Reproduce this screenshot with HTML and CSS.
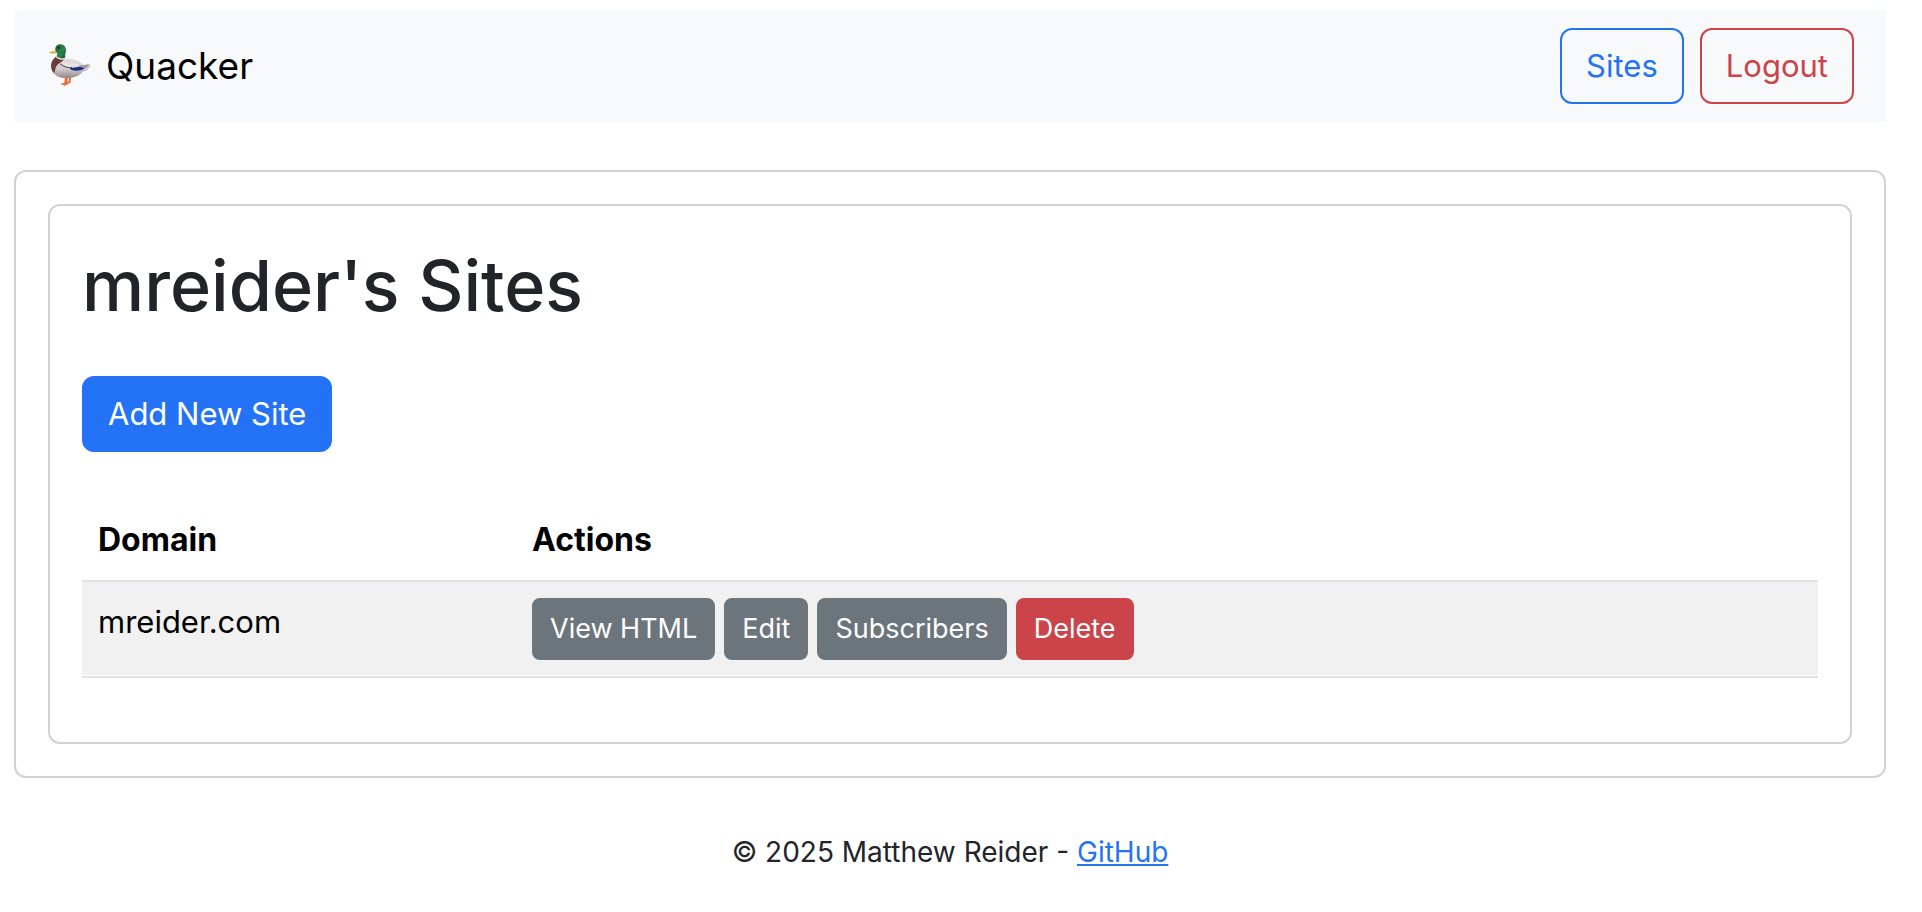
FILE: index.html
```html
<!DOCTYPE html>
<html lang="en">
<head>
<meta charset="utf-8">
<meta name="viewport" content="width=device-width, initial-scale=1">
<title>Quacker</title>
<link rel="stylesheet" href="styles.css">
</head>
<body>
<nav class="navbar">
  <a class="brand" href="#">
    <svg class="brand-duck" viewBox="0 0 44 44" aria-hidden="true">
      <defs>
        <linearGradient id="wing" x1="0" y1="0" x2="0" y2="1">
          <stop offset="0" stop-color="#e6dfe0"/>
          <stop offset=".55" stop-color="#d2cacc"/>
          <stop offset="1" stop-color="#8f8688"/>
        </linearGradient>
        <linearGradient id="head" x1="0" y1="0" x2="1" y2="1">
          <stop offset="0" stop-color="#1f5f35"/>
          <stop offset=".6" stop-color="#2a8547"/>
          <stop offset="1" stop-color="#14502c"/>
        </linearGradient>
      </defs>
      <path d="M17 33l-.6 5.500-4.400 1.600 3.200.6 1.600 1.400 2-1.600 1.200.3-.6-2 .6-5.800zM21 33l-.4 4.600-3 1.400 3.400.6 2-1.200-.5-1 .8-4.400z" fill="#ec6a35"/>
      <path d="M8 14C4 18 2.500 23 4.600 27.500c3 5.500 9.400 7 15.400 6.500 7-.5 12.500-3 15-6.500 4-.6 7.500-3.500 8-7-2.500.8-5 1-7.500.4C31 16.500 25 14.200 17 14.400z" fill="url(#wing)"/>
      <path d="M8.300 12.500C4.500 15 2.600 19 3.200 23.500c.3 2.300 1.300 4.300 3 5.800 1.300-3.500.8-5.300 2.800-8 1.800-2.500 5.500-3.500 7.700-6.900z" fill="#6b3c37"/>
      <path d="M8.500 11.700c2.400 2.300 5.400 3 8.600 2l-.5 1.500c-2.800 1-6.600.6-8.800-1.900z" fill="#e9e7e5"/>
      <path d="M12 20c5-2.300 15-1.500 22 1l-6 3.400c-5 .5-11-.8-16-4.400z" fill="#e9e2e3"/>
      <path d="M12 19.800c4 3.200 8.500 4.300 12 4" fill="none" stroke="#493d40" stroke-width="1"/>
      <path d="M22 23.500c4 .6 9-1 12.500-1.500l2 2.500c-4 2.500-9.500 3-14 1z" fill="#1b2f86"/>
      <path d="M30 21.800c3.500-.7 8-.7 11.500-2l-3.200 4.400c-2.800.2-5.300-.7-8.300-2.400z" fill="#a39a9c"/>
      <path d="M7.200 6.400C5 7 2.200 7.600.5 8.300c1.500 1.500 5.500 1.500 8.300 1z" fill="#e3b04a"/>
      <path d="M12 .2c4 0 6.200 2.800 6 6-.1 2.500-1.300 4.200-.7 7.200-2.600 1.500-6.400.9-8.800-1.400.8-1.200 1.200-2.200.2-3.600C5.500 4.500 8.300.2 12 .2z" fill="url(#head)"/>
      <circle cx="10.600" cy="3.800" r="1" fill="#0b130d"/>
    </svg>
    <span>Quacker</span>
  </a>
  <div class="nav-actions">
    <a class="btn btn-outline-primary" href="#">Sites</a>
    <button class="btn btn-outline-danger" type="button">Logout</button>
  </div>
</nav>

<main class="card">
  <section class="card card-inner">
    <h1 class="title">mreider's Sites</h1>
    <a class="btn btn-primary" href="#">Add New Site</a>
    <table class="sites">
      <thead>
        <tr><th class="col-domain" scope="col">Domain</th><th scope="col">Actions</th></tr>
      </thead>
      <tbody>
        <tr>
          <td>mreider.com</td>
          <td>
            <div class="row-actions">
              <a class="btn btn-sm btn-secondary" href="#">View HTML</a>
              <a class="btn btn-sm btn-secondary" href="#">Edit</a>
              <a class="btn btn-sm btn-secondary" href="#">Subscribers</a>
              <button class="btn btn-sm btn-danger" type="button">Delete</button>
            </div>
          </td>
        </tr>
      </tbody>
    </table>
  </section>
</main>

<footer class="footer">© 2025 Matthew Reider - <a class="footer-link" href="#">GitHub</a></footer>
</body>
</html>
```
FILE: styles.css
```css
* {
  box-sizing: border-box;
}

body {
  margin: 0;
  padding: 10px 36px 0 14px;
  background: #fff;
  color: #212529;
  font-family: Inter, "Liberation Sans", sans-serif;
  font-size: 31px;
  line-height: 48px;
}

.navbar {
  display: flex;
  align-items: center;
  justify-content: space-between;
  padding: 18px 32px 18px 34px;
  background: #f8f9fb;
}

.brand {
  display: flex;
  align-items: center;
  gap: 14px;
  color: #000;
  font-size: 37px;
  text-decoration: none;
}

.brand-duck {
  width: 44px;
  height: 44px;
}

.nav-actions {
  display: flex;
  gap: 16px;
}

.btn {
  display: inline-block;
  padding: 12px 24px;
  border: 2px solid transparent;
  border-radius: 12px;
  background: transparent;
  font: inherit;
  text-decoration: none;
  cursor: pointer;
}

.btn-outline-primary {
  border-color: #2472f5;
  color: #2472f5;
}

.btn-outline-danger {
  border-color: #cb444a;
  color: #cb444a;
}

.btn-primary {
  background: #2472f5;
  border-color: #2472f5;
  color: #fff;
}

.btn-sm {
  padding: 8px 16px;
  border-radius: 8px;
  font-size: 27px;
  line-height: 42px;
}

.btn-secondary {
  background: #6d757c;
  border-color: #6d757c;
  color: #fff;
}

.btn-danger {
  background: #cb444a;
  border-color: #cb444a;
  color: #fff;
}

.card {
  margin-top: 48px;
  padding: 32px;
  border: 2px solid #d2d2d2;
  border-radius: 12px;
}

.card-inner {
  margin-top: 0;
}

.title {
  margin: 0 0 42px;
  font-size: 70px;
  font-weight: 500;
  line-height: 96px;
}

.sites {
  width: 100%;
  margin: 48px 0 32px;
  border-collapse: separate;
  border-spacing: 0;
  color: #000;
}

.sites th,
.sites td {
  padding: 16px;
  border-bottom: 2px solid #dee2e6;
  text-align: left;
  vertical-align: top;
}

.sites th {
  font-size: 32px;
  font-weight: 700;
}

.sites td {
  background: #f1f1f1;
  box-shadow: inset 0 -1px #fff;
}

.sites .col-domain {
  width: 25%;
}

.row-actions {
  display: flex;
  flex-wrap: wrap;
  gap: 9px;
}

.footer {
  padding: 53px 0 32px;
  font-size: 28px;
  line-height: 42px;
  text-align: center;
}

.footer-link {
  color: #2472f5;
}
```
